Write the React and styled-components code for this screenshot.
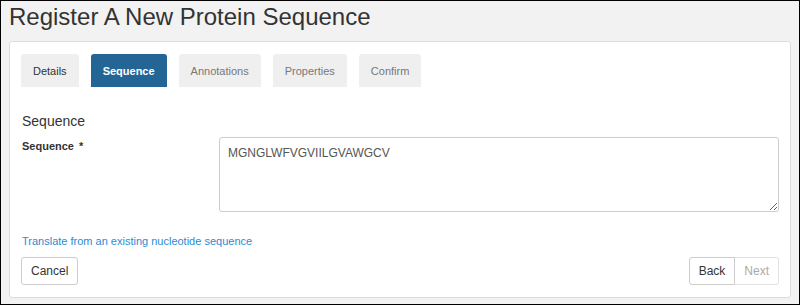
import React from "react"
import styled, { createGlobalStyle } from "styled-components"

const GlobalStyle = createGlobalStyle`
  html, body {
    margin: 0;
    padding: 0;
    background: #fff;
  }
  * {
    box-sizing: border-box;
  }
`

const Frame = styled.div`
  width: 800px;
  height: 305px;
  border: 1px solid #000;
  background: #f2f2f2;
  padding: 0 8px;
  font-family: "Liberation Sans", Arial, sans-serif;
  color: #333;
`

const Title = styled.h1`
  margin: 0;
  padding-top: 1px;
  height: 40px;
  font-size: 24px;
  line-height: 30px;
  font-weight: normal;
  color: #333;
`

const Panel = styled.div`
  background: #fff;
  border: 1px solid #dcdcdc;
  border-radius: 3px;
  padding: 12px 11px 12px 11px;
  display: flex;
  flex-direction: column;
`

const Tabs = styled.div`
  display: flex;
  gap: 12px;
`

const Tab = styled.div`
  height: 33px;
  padding: 0 12px;
  display: flex;
  align-items: center;
  font-size: 11px;
  border-radius: 3px 3px 0 0;
  background: ${p => (p.$active ? "#236695" : "#efefef")};
  color: ${p => (p.$active ? "#fff" : p.$done ? "#333" : "#777")};
  font-weight: ${p => (p.$active ? "bold" : "normal")};
`

const SectionTitle = styled.h2`
  margin: 24px 0 0 1px;
  font-size: 14px;
  line-height: 20px;
  font-weight: normal;
  color: #333;
`

const FormRow = styled.div`
  display: flex;
  margin-top: 6px;
`

const Label = styled.label`
  width: 198px;
  padding: 1px 0 0 1px;
  font-size: 11px;
  line-height: 16px;
  font-weight: bold;
  color: #333;
`

const Required = styled.span`
  margin-left: 5px;
`

const Input = styled.textarea`
  flex: 1;
  height: 75px;
  border: 1px solid #ccc;
  border-radius: 3px;
  padding: 7px 8px;
  font-family: "Liberation Sans", Arial, sans-serif;
  font-size: 12px;
  line-height: 16px;
  color: #555;
  resize: vertical;
  outline: none;
`

const Link = styled.a`
  margin: 21px 0 0 1px;
  font-size: 11px;
  line-height: 16px;
  color: #2b8bd5;
  text-decoration: none;
  cursor: pointer;
  align-self: flex-start;
`

const Footer = styled.div`
  display: flex;
  justify-content: space-between;
  margin-top: 8px;
`

const Button = styled.button`
  height: 28px;
  padding: 0 ${p => (p.$wide ? 9 : 9)}px;
  font-family: "Liberation Sans", Arial, sans-serif;
  font-size: 12px;
  background: #fff;
  color: ${p => (p.disabled ? "#aaa" : "#333")};
  border: 1px solid ${p => (p.disabled ? "#e3e3e3" : "#ccc")};
  border-radius: 3px;
  cursor: ${p => (p.disabled ? "default" : "pointer")};
`

const ButtonGroup = styled.div`
  display: flex;
  & > button:first-child {
    border-top-right-radius: 0;
    border-bottom-right-radius: 0;
  }
  & > button:last-child {
    border-left: none;
    border-top-left-radius: 0;
    border-bottom-left-radius: 0;
  }
`

const steps = [
  { name: "Details", done: true },
  { name: "Sequence", active: true },
  { name: "Annotations" },
  { name: "Properties" },
  { name: "Confirm" },
]

const App = () => {
  return (
    <>
      <GlobalStyle />
      <Frame>
        <Title>Register A New Protein Sequence</Title>
        <Panel>
          <Tabs>
            {steps.map(s => (
              <Tab key={s.name} $active={s.active} $done={s.done}>{s.name}</Tab>
            ))}
          </Tabs>
          <SectionTitle>Sequence</SectionTitle>
          <FormRow>
            <Label>Sequence<Required>*</Required></Label>
            <Input defaultValue="MGNGLWFVGVIILGVAWGCV" />
          </FormRow>
          <Link>Translate from an existing nucleotide sequence</Link>
          <Footer>
            <Button $wide>Cancel</Button>
            <ButtonGroup>
              <Button>Back</Button>
              <Button disabled>Next</Button>
            </ButtonGroup>
          </Footer>
        </Panel>
      </Frame>
    </>
  )
}

export default App
